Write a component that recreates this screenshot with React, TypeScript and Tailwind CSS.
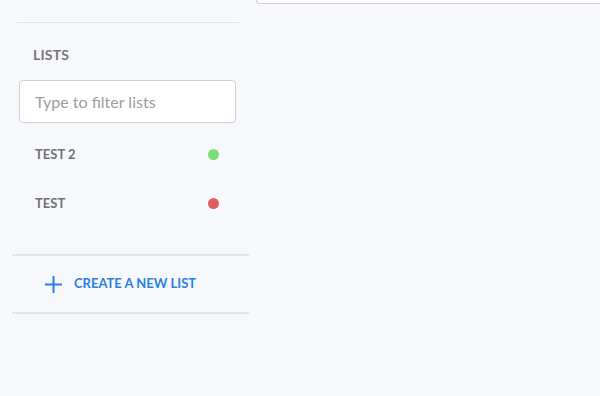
import { useState } from 'react'

type ListItem = {
  name: string;
  color: string;
};

const lists: ListItem[] = [
  { name: 'TEST 2', color: 'bg-[#7bdc78]' },
  { name: 'TEST', color: 'bg-[#e15f5f]' },
];

const Sidebar: React.FC = () => {
  const [filter, setFilter] = useState<string>('');

  return (
    <div className="w-[256px] shrink-0 pt-[22px]">
      <div className="ml-[17px] w-[222px] border-t border-[#dfe1e6]" />
      <div className="pl-[33px] pt-[24px] text-[14px] leading-[16px] font-bold text-[#75777e] tracking-[0.2px]">
        LISTS
      </div>
      <input
        className="ml-[19px] mt-[17px] w-[217px] h-[43px] rounded-[4px] border border-[#cfd0d4] bg-white px-[15px] text-[16px] text-[#555] placeholder:text-[#9c9ca3] outline-none"
        placeholder="Type to filter lists"
        value={filter}
        onChange={(e) => setFilter(e.target.value)}
      />
      <div className="mt-[7px]">
        {lists
          .filter((l) => l.name.toLowerCase().includes(filter.toLowerCase()))
          .map((l) => (
            <div key={l.name} className="flex items-center h-[49px] pl-[35px] pr-[37px]">
              <span className="flex-1 text-[13px] font-bold text-[#6f7179]">{l.name}</span>
              <span className={`w-[11px] h-[11px] rounded-full ${l.color}`} />
            </div>
          ))}
      </div>
      <div className="ml-[12px] mt-[26px] w-[237px] border-t-2 border-[#e1e3e8]" />
      <button className="flex items-center h-[56px] pl-[45px] gap-[12px] text-[#2a7fe2]">
        <svg width="17" height="17" viewBox="0 0 17 17">
          <path d="M8.5 0 V17 M0 8.5 H17" stroke="currentColor" strokeWidth="2" />
        </svg>
        <span className="text-[13px] font-bold">CREATE A NEW LIST</span>
      </button>
      <div className="ml-[12px] w-[237px] border-t-2 border-[#e1e3e8]" />
    </div>
  );
};

export default function App() {
  return (
    <div className="flex w-[600px] h-[396px] overflow-hidden bg-[#f7f8fc] font-['Lato',sans-serif]">
      <Sidebar />
      <div className="flex-1">
        <div className="h-[4px] border-l border-b border-[#cfd0d4] rounded-bl-[4px] bg-white" />
      </div>
    </div>
  );
}
